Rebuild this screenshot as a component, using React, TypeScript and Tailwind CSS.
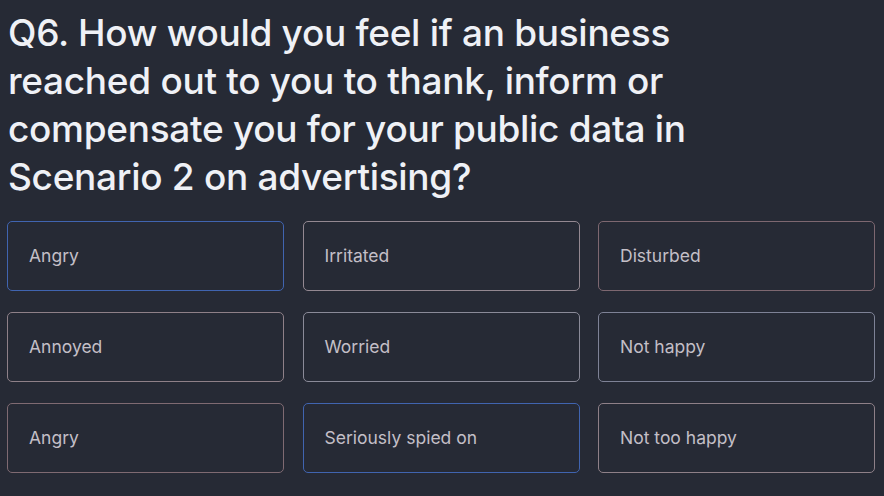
import React from 'react';

const OPTIONS = [
  { label: 'Angry', border: 'border-[#4064b0]' },
  { label: 'Irritated', border: 'border-[#938891]' },
  { label: 'Disturbed', border: 'border-[#7d6770]' },
  { label: 'Annoyed', border: 'border-[#8e8088]' },
  { label: 'Worried', border: 'border-[#8a8a98]' },
  { label: 'Not happy', border: 'border-[#7e8296]' },
  { label: 'Angry', border: 'border-[#7f6a72]' },
  { label: 'Seriously spied on', border: 'border-[#4064b0]' },
  { label: 'Not too happy', border: 'border-[#8e8088]' },
];

export default function App() {
  return (
    <div
      className="w-[884px] h-[496px] overflow-hidden bg-[#262a35] px-[7px] pt-[9px]"
      style={{ fontFamily: 'Inter, "Noto Sans", sans-serif' }}
    >
      <h1 className="pl-[1px] text-[37px] leading-[48px] font-medium tracking-[-0.3px] text-[#eff1f6]">
        Q6. How would you feel if an business
        <br />
        reached out to you to thank, inform or
        <br />
        compensate you for your public data in
        <br />
        Scenario 2 on advertising?
      </h1>

      <div className="mt-[20px] grid grid-cols-[277px_277px_277px] gap-x-[18.5px] gap-y-[21px]">
        {OPTIONS.map((opt, i) => (
          <div
            key={i}
            className={`h-[70px] flex items-center rounded-[5px] border px-[21px] text-[17.5px] text-[#c3bfc7] ${opt.border}`}
          >
            {opt.label}
          </div>
        ))}
      </div>
    </div>
  );
}
